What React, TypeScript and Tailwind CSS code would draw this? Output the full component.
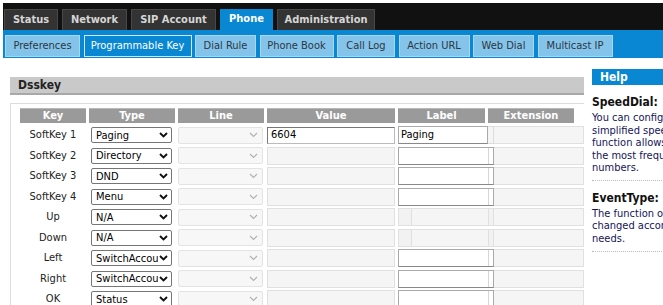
import React from 'react';

const MAIN_TABS = [
  { name: 'Status', w: 'w-[54px]' },
  { name: 'Network', w: 'w-[65px]' },
  { name: 'SIP Account', w: 'w-[85px]' },
  { name: 'Phone', w: 'w-[53px]', active: true },
  { name: 'Administration', w: 'w-[98px]' },
];

const SUB_TABS = [
  { name: 'Preferences', w: 'w-[75px]' },
  { name: 'Programmable Key', w: 'w-[108px]', active: true },
  { name: 'Dial Rule', w: 'w-[61px]' },
  { name: 'Phone Book', w: 'w-[74px]' },
  { name: 'Call Log', w: 'w-[58px]' },
  { name: 'Action URL', w: 'w-[71px]' },
  { name: 'Web Dial', w: 'w-[61px]' },
  { name: 'Multicast IP', w: 'w-[75px]' },
];

type Row = { key: string; type: string; value?: string; label?: string; labelOn: boolean; valueOn?: boolean };

const ROWS: Row[] = [
  { key: 'SoftKey 1', type: 'Paging', value: '6604', label: 'Paging', labelOn: true, valueOn: true },
  { key: 'SoftKey 2', type: 'Directory', labelOn: true },
  { key: 'SoftKey 3', type: 'DND', labelOn: true },
  { key: 'SoftKey 4', type: 'Menu', labelOn: true },
  { key: 'Up', type: 'N/A', labelOn: false },
  { key: 'Down', type: 'N/A', labelOn: false },
  { key: 'Left', type: 'SwitchAccount', labelOn: true },
  { key: 'Right', type: 'SwitchAccount', labelOn: true },
  { key: 'OK', type: 'Status', labelOn: true },
];

function Chevron({ disabled }: { disabled?: boolean }) {
  return (
    <svg width="9" height="6" viewBox="0 0 9 6" className="shrink-0">
      <path
        d="M1 1 L4.5 4.5 L8 1"
        fill="none"
        stroke={disabled ? '#b0b0b0' : '#111'}
        strokeWidth={disabled ? 1.1 : 1.9}
      />
    </svg>
  );
}

function Select({ text }: { text: string }) {
  return (
    <div className="ml-[5px] w-[81px] h-[16px] bg-white border border-[#767676] rounded-[2px] flex items-center pl-[4px] pr-[3px] gap-[1px]">
      <span className="flex-1 overflow-hidden whitespace-nowrap text-[11px] text-black leading-none">{text}</span>
      <Chevron />
    </div>
  );
}

function DisabledSelect() {
  return (
    <div className="ml-[6px] w-[85px] h-[17px] bg-[#f7f7f7] border border-[#e3e3e3] rounded-[2px] flex items-center justify-end pr-[4px]">
      <Chevron disabled />
    </div>
  );
}

function LabelCell({ r, first }: { r: Row; first: boolean }) {
  if (!r.labelOn) {
    return (
      <div className="ml-[3px] w-[96px] h-[18px] flex">
        <div className="w-[14px] h-full bg-[#f2f2f2] border border-[#e0e0e0]" />
        <div className="w-[76px] h-full bg-[#f5f5f5] border-y border-[#e0e0e0]" />
        <div className="w-[6px] h-full bg-[#f2f2f2] border border-[#e0e0e0]" />
      </div>
    );
  }
  if (first) {
    return (
      <div className="ml-[3px] w-[96px] h-[18px] flex">
        <div className="w-[90px] h-full bg-white border border-[#aaa] border-b-[#888] flex items-center pl-[2px] text-[11px] text-black">
          {r.label}
        </div>
        <div className="w-[6px] h-full bg-[#f5f5f5] border border-l-0 border-[#ddd]" />
      </div>
    );
  }
  return (
    <div className="ml-[3px] w-[96px] h-[18px] flex bg-white border border-[#aaa] border-b-[#888]">
      <div className="w-[89px] h-full" />
      <div className="flex-1 h-full border-l border-[#d6d6d6]" />
    </div>
  );
}

function DsskeyRow({ r, first }: { r: Row; first: boolean }) {
  return (
    <div className="h-[20.5px] flex items-center">
      <div className="w-[66px] text-center text-[11px] text-[#222] whitespace-nowrap">{r.key}</div>
      <Select text={r.type} />
      <DisabledSelect />
      {r.valueOn ? (
        <div className="ml-[4px] w-[128px] h-[17px] bg-white border border-[#bbb] border-t-[#777] border-l-[#777] flex items-center pl-[3px] text-[11px] text-black">
          {r.value}
        </div>
      ) : (
        <div className="ml-[4px] w-[128px] h-[18px] bg-[#f5f5f5] border border-[#e0e0e0]" />
      )}
      <LabelCell r={r} first={first} />
      <div className="w-[90px] h-[18px] bg-[#f5f5f5] border border-l-0 border-[#e0e0e0]" />
    </div>
  );
}

const HEADERS = [
  { name: 'Key', w: 'w-[66px]' },
  { name: 'Type', w: 'w-[86px]' },
  { name: 'Line', w: 'w-[86px]' },
  { name: 'Value', w: 'w-[128px]' },
  { name: 'Label', w: 'w-[87px]' },
  { name: 'Extension', w: 'w-[86px]' },
];

export default function App() {
  return (
    <div className="w-[663px] h-[305px] overflow-hidden bg-white pt-[3px] pl-[3px] font-['DejaVu_Sans_Condensed','DejaVu_Sans',sans-serif]">
      {/* main tabs */}
      <div className="h-[27px] bg-[#111] flex items-end pl-[1px] gap-[4px]">
        {MAIN_TABS.map((t) => (
          <div
            key={t.name}
            className={`${t.w} h-[21px] flex items-center justify-center text-[11px] font-bold ${
              t.active ? 'bg-[#0987d3] text-white' : 'bg-[#333] text-[#d6d6d6] border border-b-0 border-[#484848]'
            }`}
          >
            {t.name}
          </div>
        ))}
      </div>

      {/* sub tabs */}
      <div className="h-[28px] bg-[#0987d3] flex items-start pt-[5px] pl-[2px] gap-[3.5px]">
        {SUB_TABS.map((t) => (
          <div
            key={t.name}
            className={`${t.w} h-[22px] flex items-center justify-center text-[11px] border ${
              t.active ? 'bg-[#0987d3] text-white border-[#cfe7f7]' : 'bg-[#84c4ea] text-[#2e3642] border-[#a9d7f2]'
            }`}
          >
            {t.name}
          </div>
        ))}
      </div>

      <div className="flex">
        {/* left panel */}
        <div className="ml-[7px] mt-[19px] w-[575px]">
          <div className="h-[18px] bg-[#c9c9c9] border-b-2 border-[#a8a8a8] flex items-center pl-[8px] text-[12px] font-bold text-[#222]">
            Dsskey
          </div>
          <div className="mt-[8px] border-t border-l border-[#ddd] pt-[4px] pl-[9px]">
            <div className="flex gap-[3px] h-[15px]">
              {HEADERS.map((h) => (
                <div
                  key={h.name}
                  className={`${h.w} bg-[#9a9a9a] border-t border-[#b8b8b8] flex items-center justify-center text-[11px] font-bold text-white`}
                >
                  {h.name}
                </div>
              ))}
            </div>
            <div className="mt-[2px]">
              {ROWS.map((r, i) => (
                <DsskeyRow key={r.key} r={r} first={i === 0} />
              ))}
            </div>
          </div>
        </div>

        {/* help panel */}
        <div className="ml-[8px] mt-[11px] w-[150px] shrink-0">
          <div className="h-[16px] bg-[#0987d3] flex items-center pl-[8px] text-[12px] font-bold text-white">Help</div>
          <div className="mt-[8px] text-[12px] font-bold text-[#111]">SpeedDial:</div>
          <div className="mt-[1px] text-[11px] leading-[12.5px] text-[#14145a] whitespace-nowrap">
            You can configure the
            <br />
            simplified speed dial
            <br />
            function allows you to dial
            <br />
            the most frequently used
            <br />
            numbers.
          </div>
          <div className="mt-[5px] border-t border-dotted border-[#bbb]" />
          <div className="mt-[8px] text-[12px] font-bold text-[#111]">EventType:</div>
          <div className="mt-[1px] text-[11px] leading-[12.5px] text-[#14145a] whitespace-nowrap">
            The function of the key can be
            <br />
            changed according to user's
            <br />
            needs.
          </div>
          <div className="mt-[6px] border-t border-dotted border-[#bbb]" />
        </div>
      </div>
    </div>
  );
}
